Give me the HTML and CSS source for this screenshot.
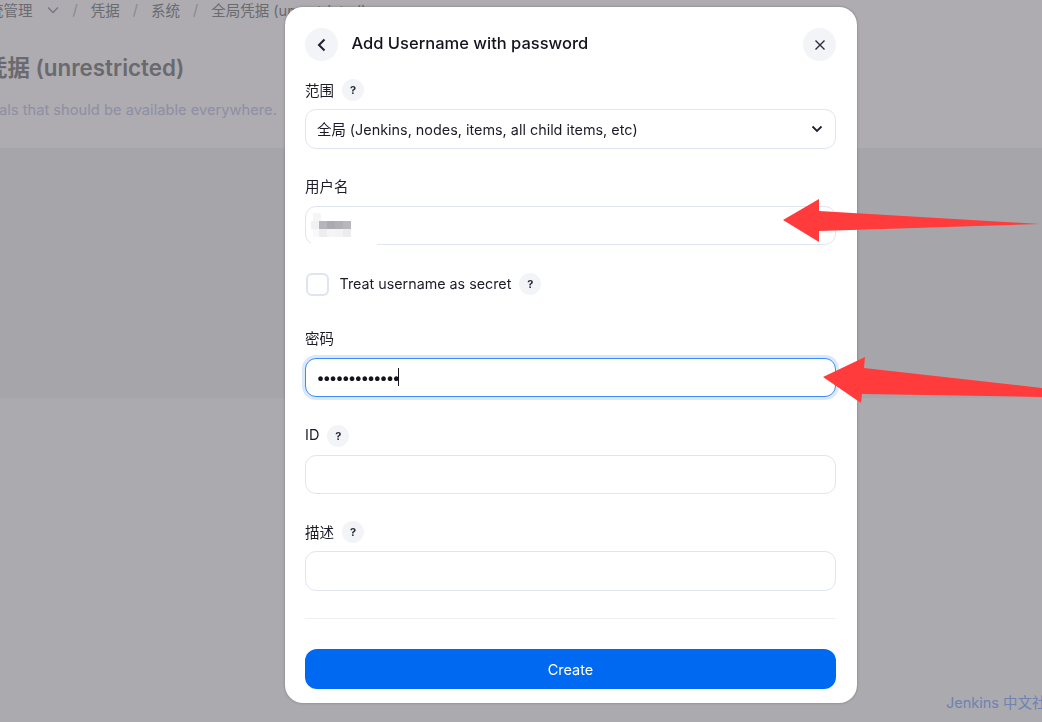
FILE: index.html
```html
<!DOCTYPE html>
<html lang="zh-CN">
<head>
    <meta charset="UTF-8">
    <meta name="viewport" content="width=device-width, initial-scale=1.0">
    <title>Add Username with password</title>
    <link rel="stylesheet" href="styles.css">
</head>
<body>
    <div class="page">
        <div class="breadcrumbs">
            <span>统管理</span>
            <svg class="crumb-arrow" width="14" height="14" viewBox="0 0 14 14"><path d="M2 4.500 7 9.500 12 4.500" fill="none" stroke="currentColor" stroke-width="1.300"/></svg>
            <span class="sep">/</span>
            <span>凭据</span>
            <span class="sep">/</span>
            <span>系统</span>
            <span class="sep">/</span>
            <span>全局凭据 (unrestricted)</span>
        </div>
        <h1 class="page-title">凭据 (unrestricted)</h1>
        <p class="page-desc">als that should be available everywhere.</p>
        <div class="band"></div>
        <div class="page-footer">Jenkins 中文社区</div>
    </div>

    <div class="overlay">
        <div class="dialog">
            <div class="dialog-head">
                <button class="round-btn">
                    <svg width="16" height="16" viewBox="0 0 16 16"><path d="M10.500 2.500 5 8l5.500 5.500" fill="none" stroke="#1f2030" stroke-width="2"/></svg>
                </button>
                <h2>Add Username with password</h2>
                <button class="round-btn close-btn">
                    <svg width="14" height="14" viewBox="0 0 14 14"><path d="M2.500 2.500l9 9M11.500 2.500l-9 9" fill="none" stroke="#2b2c3a" stroke-width="1.400"/></svg>
                </button>
            </div>

            <div class="field">
                <div class="label-row"><label>范围</label><span class="help">?</span></div>
                <div class="input select-box">
                    <span>全局 (Jenkins, nodes, items, all child items, etc)</span>
                    <svg width="14" height="14" viewBox="0 0 14 14"><path d="M2.500 4.500 7 9 11.500 4.500" fill="none" stroke="#1f2030" stroke-width="1.800"/></svg>
                </div>
            </div>

            <div class="field">
                <div class="label-row"><label>用户名</label></div>
                <div class="input username">
                    <svg class="mosaic" width="66" height="32" viewBox="0 0 66 32">
                        <rect x="2" y="0" width="8" height="8" fill="#f6f6f7"/>
                        <rect x="0" y="8" width="8" height="8" fill="#f1f1f3"/>
                        <rect x="8" y="8" width="8" height="8" fill="#b5b5bb"/>
                        <rect x="16" y="8" width="8" height="8" fill="#aaaab0"/>
                        <rect x="24" y="8" width="8" height="8" fill="#b0b0b6"/>
                        <rect x="32" y="8" width="8" height="8" fill="#b7b7bc"/>
                        <rect x="2" y="16" width="6" height="8" fill="#f8f8f9"/>
                        <rect x="8" y="16" width="8" height="8" fill="#ededef"/>
                        <rect x="16" y="16" width="8" height="8" fill="#f5f5f6"/>
                        <rect x="24" y="16" width="8" height="8" fill="#f3f3f4"/>
                        <rect x="32" y="16" width="8" height="8" fill="#ececee"/>
                        <rect x="0" y="24" width="66" height="8" fill="#fff"/>
                    </svg>
                </div>
            </div>

            <div class="check-row">
                <span class="checkbox"></span>
                <span class="check-text">Treat username as secret</span>
                <span class="help">?</span>
            </div>

            <div class="field password-field">
                <div class="label-row"><label>密码</label></div>
                <div class="input focused"><span class="dots">•••••••••••••</span><span class="caret"></span></div>
            </div>

            <div class="field">
                <div class="label-row"><label>ID</label><span class="help">?</span></div>
                <div class="input"></div>
            </div>

            <div class="field">
                <div class="label-row"><label>描述</label><span class="help">?</span></div>
                <div class="input"></div>
            </div>

            <hr class="divider">
            <button class="create-btn">Create</button>
        </div>
    </div>

    <!-- annotation arrows drawn over the screenshot -->
    <svg class="arrows" width="1042" height="722" viewBox="0 0 1042 722">
        <polygon points="783,220 819,199 819,211 1040,224 819,231 819,242" fill="#ff3b3b"/>
        <polygon points="823,377 865,357 864,368 1042,388 1042,397 862,394 861,403" fill="#ff3b3b"/>
    </svg>
</body>
</html>
```

FILE: styles.css
```css
* {
    box-sizing: border-box;
}

body {
    margin: 0;
    height: 722px;
    overflow: hidden;
    font-family: Inter, "Noto Sans CJK SC", sans-serif;
    color: #14141f;
}

.page {
    height: 722px;
    display: flex;
    flex-direction: column;
    background-color: #f5f4fa;
}

.breadcrumbs {
    display: flex;
    align-items: center;
    gap: 13px;
    height: 19px;
    margin-left: -11px;
    font-size: 14.500px;
    color: #989aa3;
    white-space: nowrap;
    background-color: #f9f7fd;
}

.crumb-arrow {
    color: #a6a9b8;
}

.sep {
    color: #c4c5cd;
}

.page-title {
    margin: 0 0 0 -15px;
    padding-top: 34px;
    height: 71px;
    font-size: 22.400px;
    font-weight: 600;
    line-height: 30px;
    color: #98979f;
    background-color: #f9f7fd;
    white-space: nowrap;
}

.page-desc {
    margin: 0 0 0 -1px;
    height: 58px;
    padding-top: 9px;
    font-size: 14.700px;
    line-height: 22px;
    color: #cbcde9;
    background-color: #f9f7fd;
}

.band {
    height: 250px;
    background-color: #eeeef4;
}

.page-footer {
    margin-top: auto;
    margin-right: -19px;
    margin-bottom: 10px;
    text-align: right;
    font-size: 14.500px;
    line-height: 18px;
    color: #9fbbff;
    white-space: nowrap;
}

.overlay {
    position: fixed;
    inset: 0;
    display: flex;
    align-items: flex-start;
    justify-content: center;
    padding: 7px 0 0 100px;
    background-color: rgba(0, 0, 0, 0.3);
}

.dialog {
    width: 572px;
    height: 696px;
    padding: 21px 21px 14px 20px;
    background-color: #fff;
    border-radius: 18px;
    box-shadow: 0 0 3px rgba(0, 0, 0, 0.3);
}

.dialog-head {
    display: flex;
    align-items: center;
    height: 33px;
    margin-bottom: 18px;
}

.dialog-head h2 {
    margin: 0 0 3px 13.500px;
    font-size: 16.500px;
    font-weight: 500;
    color: #14141f;
}

.round-btn {
    width: 33px;
    height: 33px;
    padding: 0;
    border: none;
    border-radius: 50%;
    background-color: #f2f4f7;
    display: flex;
    align-items: center;
    justify-content: center;
}

.close-btn {
    margin-left: auto;
}

.field {
    margin-bottom: 27px;
}

.password-field {
    margin-bottom: 27.500px;
}

.label-row {
    display: flex;
    align-items: center;
    gap: 8px;
    height: 22px;
    margin-bottom: 8px;
}

.label-row label {
    padding-bottom: 2px;
    font-size: 14.500px;
    color: #1c1c28;
}

.help {
    width: 22px;
    height: 22px;
    border-radius: 50%;
    background-color: #f2f4f7;
    display: inline-flex;
    align-items: center;
    justify-content: center;
    font-size: 11px;
    font-weight: 700;
    color: #2b2c3a;
}

.input {
    height: 39.500px;
    padding: 0 11px;
    display: flex;
    align-items: center;
    border: 1px solid #e1e5ef;
    border-radius: 11px;
    background-color: #fff;
    font-size: 14.400px;
    color: #1c1c28;
}

.select-box {
    justify-content: space-between;
}

.username {
    padding-left: 5px;
}

.mosaic {
    margin-top: 8px;
}

.check-row {
    display: flex;
    align-items: center;
    height: 24px;
    margin-bottom: 31.500px;
}

.checkbox {
    width: 23px;
    height: 23px;
    margin-left: 0.500px;
    border: 2px solid #dfe4f0;
    border-radius: 6px;
}

.check-text {
    margin: 0 8px 2px 11px;
    font-size: 14.300px;
    color: #1c1c28;
}

.focused {
    border-color: #3d8bf5;
    box-shadow: 0 0 0 3px #d9e8fd;
}

.dots {
    font-size: 15px;
    font-weight: 700;
    letter-spacing: -0.800px;
    color: #14141f;
}

.caret {
    width: 1px;
    height: 18px;
    margin-left: -1px;
    background-color: #14141f;
}

.divider {
    height: 1px;
    margin: 0 0 30.500px;
    border: none;
    background-color: #eff0f4;
}

.create-btn {
    display: block;
    width: 100%;
    height: 40px;
    border: none;
    border-radius: 12px;
    background-color: #0069f2;
    color: #fff;
    font-family: inherit;
    font-size: 14.500px;
    font-weight: 400;
}

.arrows {
    position: fixed;
    top: 0;
    left: 0;
    pointer-events: none;
}
```
